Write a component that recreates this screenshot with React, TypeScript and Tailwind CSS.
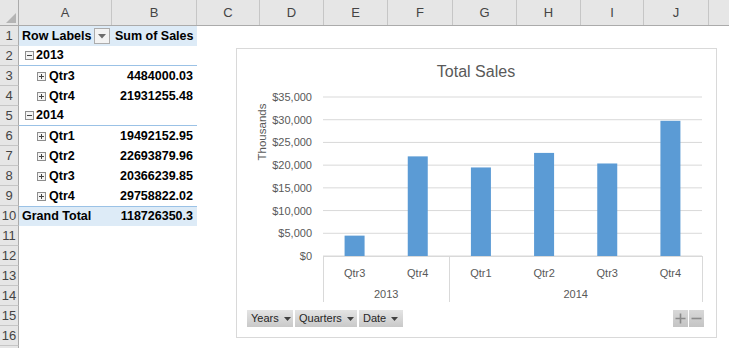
// Excel sheet with a pivot table and a pivot chart (Total Sales)

const COLS = [
  { name: "A", w: 93 },
  { name: "B", w: 85 },
  { name: "C", w: 63 },
  { name: "D", w: 64 },
  { name: "E", w: 64 },
  { name: "F", w: 65 },
  { name: "G", w: 64 },
  { name: "H", w: 64 },
  { name: "I", w: 63 },
  { name: "J", w: 65 },
  // column K is only partly in view; its letter falls past the edge
  { name: "", w: 64 },
];

type PivotRow = {
  label?: string;
  value?: string;
  kind: "header" | "year" | "qtr" | "total" | "empty";
};

const ROWS: PivotRow[] = [
  { kind: "header", label: "Row Labels", value: "Sum of Sales" },
  { kind: "year", label: "2013" },
  { kind: "qtr", label: "Qtr3", value: "4484000.03" },
  { kind: "qtr", label: "Qtr4", value: "21931255.48" },
  { kind: "year", label: "2014" },
  { kind: "qtr", label: "Qtr1", value: "19492152.95" },
  { kind: "qtr", label: "Qtr2", value: "22693879.96" },
  { kind: "qtr", label: "Qtr3", value: "20366239.85" },
  { kind: "qtr", label: "Qtr4", value: "29758822.02" },
  { kind: "total", label: "Grand Total", value: "118726350.3" },
  { kind: "empty" },
  { kind: "empty" },
  { kind: "empty" },
  { kind: "empty" },
  { kind: "empty" },
  { kind: "empty" },
];

const SALES = [
  { q: "Qtr3", v: 4484000.03 },
  { q: "Qtr4", v: 21931255.48 },
  { q: "Qtr1", v: 19492152.95 },
  { q: "Qtr2", v: 22693879.96 },
  { q: "Qtr3", v: 20366239.85 },
  { q: "Qtr4", v: 29758822.02 },
];

function ExpandBox({ plus }: { plus: boolean }) {
  return (
    <svg width="9" height="9" viewBox="0 0 9 9" className="shrink-0">
      <rect x="0.5" y="0.5" width="8" height="8" fill="#f4f4f4" stroke="#8e8e8e" />
      <line x1="2" y1="4.5" x2="7" y2="4.5" stroke="#444" />
      {plus && <line x1="4.5" y1="2" x2="4.5" y2="7" stroke="#444" />}
    </svg>
  );
}

function FilterButton() {
  return (
    <div className="w-[16px] h-[16px] shrink-0 border border-[#acacac] bg-[#f3f3f3] flex items-center justify-center">
      <svg width="8" height="5" viewBox="0 0 8 5">
        <path d="M0 0 H8 L4 4.5 Z" fill="#6d6d6d" />
      </svg>
    </div>
  );
}

function PivotCells({ row }: { row: PivotRow }) {
  if (row.kind === "empty") {
    return <div className="w-[178px] shrink-0" />;
  }

  const bg =
    row.kind === "header" || row.kind === "total" ? "bg-[#ddebf7]" : "";
  const border =
    row.kind === "year"
      ? "border-b border-[#9bc2e6]"
      : row.kind === "total"
        ? "border-t border-[#9bc2e6]"
        : "";

  return (
    <div
      className={`flex w-[178px] shrink-0 h-full font-bold text-[12.5px] text-black whitespace-nowrap ${bg} ${border}`}
    >
      <div className="w-[93px] shrink-0 flex items-center">
        {row.kind === "header" && (
          <>
            <span className="pl-[3px] w-[75px] shrink-0">{row.label}</span>
            <FilterButton />
          </>
        )}
        {row.kind === "year" && (
          <span className="pl-[6px] flex items-center gap-[2px]">
            <ExpandBox plus={false} />
            {row.label}
          </span>
        )}
        {row.kind === "qtr" && (
          <span className="pl-[18px] flex items-center gap-[3px]">
            <ExpandBox plus />
            {row.label}
          </span>
        )}
        {row.kind === "total" && <span className="pl-[3px]">{row.label}</span>}
      </div>
      <div
        className={`w-[85px] shrink-0 flex items-center ${
          row.kind === "header" ? "pl-[3px]" : "justify-end pr-[4px]"
        }`}
      >
        {row.value}
      </div>
    </div>
  );
}

function ChartFieldButton({ label, w }: { label: string; w: string }) {
  return (
    <div
      className={`${w} h-[17px] flex items-center gap-[5px] pl-[4px] bg-gradient-to-b from-[#e4e4e4] to-[#c9c9c9] text-[11px] text-[#262626]`}
    >
      <span>{label}</span>
      <svg width="7" height="4" viewBox="0 0 7 4">
        <path d="M0 0 H7 L3.5 4 Z" fill="#404040" />
      </svg>
    </div>
  );
}

function PivotChart() {
  const plotLeft = 86;
  const plotRight = 465;
  const base = 207;
  const scale = 159 / 35000;
  const catW = (plotRight - plotLeft) / 6;
  const ticks = [0, 5000, 10000, 15000, 20000, 25000, 30000, 35000];

  return (
    <div className="absolute left-[236px] top-[48px] w-[481px] h-[290px] bg-white border border-[#d9d9d9]">
      <svg width="479" height="288" className="absolute left-0 top-0">
        <text x="239" y="28" textAnchor="middle" fontSize="16" fill="#595959">
          Total Sales
        </text>
        <text
          transform="translate(29 83) rotate(-90)"
          textAnchor="middle"
          fontSize="11.5"
          fill="#595959"
        >
          Thousands
        </text>
        {ticks.map((t) => {
          const y = base - t * scale;
          return (
            <g key={t}>
              <line x1={plotLeft} y1={y} x2={plotRight} y2={y} stroke="#d9d9d9" />
              <text x="75" y={y + 4} textAnchor="end" fontSize="11" fill="#595959">
                ${t.toLocaleString("en-US")}
              </text>
            </g>
          );
        })}
        {SALES.map((s, i) => {
          const cx = plotLeft + catW * (i + 0.5);
          const h = (s.v / 1000) * scale;
          return (
            <g key={i}>
              <rect x={cx - 10} y={base - h} width="20" height={h} fill="#5b9bd5" />
              <text x={cx} y="228" textAnchor="middle" fontSize="11" fill="#595959">
                {s.q}
              </text>
            </g>
          );
        })}
        <line x1={plotLeft} y1={base + 0.5} x2={plotRight} y2={base + 0.5} stroke="#d9d9d9" />
        {[plotLeft, plotLeft + catW * 2, plotRight].map((x) => (
          <line
            key={x}
            x1={Math.round(x) + 0.5}
            y1={base}
            x2={Math.round(x) + 0.5}
            y2={253}
            stroke="#d9d9d9"
          />
        ))}
        <text x={plotLeft + catW} y="249" textAnchor="middle" fontSize="11" fill="#595959">
          2013
        </text>
        <text x={plotLeft + catW * 4} y="249" textAnchor="middle" fontSize="11" fill="#595959">
          2014
        </text>
      </svg>

      {/* pivot field buttons */}
      <div className="absolute left-[10px] top-[261px] flex gap-[2px]">
        <ChartFieldButton label="Years" w="w-[46px]" />
        <ChartFieldButton label="Quarters" w="w-[62px]" />
        <ChartFieldButton label="Date" w="w-[44px]" />
      </div>
      <div className="absolute left-[436px] top-[261px] flex gap-[1px]">
        <div className="w-[15px] h-[17px] bg-gradient-to-b from-[#d8d8d8] to-[#c4c4c4] flex items-center justify-center">
          <svg width="11" height="11" viewBox="0 0 11 11">
            <path d="M5.5 0.5 V10.5 M0.5 5.5 H10.5" stroke="#8a8a8a" strokeWidth="1.6" />
          </svg>
        </div>
        <div className="w-[15px] h-[17px] bg-gradient-to-b from-[#d8d8d8] to-[#c4c4c4] flex items-center justify-center">
          <svg width="11" height="11" viewBox="0 0 11 11">
            <path d="M0.5 5.5 H10.5" stroke="#8a8a8a" strokeWidth="1.6" />
          </svg>
        </div>
      </div>
    </div>
  );
}

export default function App() {
  return (
    <div className="relative w-[729px] h-[348px] overflow-hidden bg-white font-['Liberation_Sans',Arial,sans-serif]">
      {/* column headers */}
      <div className="flex h-[26px] bg-[#e6e6e6] border-b border-[#ababab]">
        <div className="w-[19px] shrink-0 border-r border-[#ababab] flex items-end justify-end p-[2px]">
          <svg width="10" height="10" viewBox="0 0 10 10">
            <path d="M10 0 V10 H0 Z" fill="#b4b4b4" />
          </svg>
        </div>
        {COLS.map((c, i) => (
          <div
            key={i}
            style={{ width: c.w }}
            className="shrink-0 border-r border-[#c6c6c6] flex items-center justify-center text-[13px] text-[#444]"
          >
            {c.name}
          </div>
        ))}
      </div>

      {/* rows */}
      {ROWS.map((r, i) => (
        <div key={i} className="flex h-[20px]">
          <div className="w-[19px] shrink-0 bg-[#e6e6e6] border-r border-[#ababab] border-b border-b-[#c6c6c6] flex items-center justify-center text-[13px] text-[#444]">
            {i + 1}
          </div>
          <PivotCells row={r} />
        </div>
      ))}
      <div className="flex h-[20px]">
        <div className="w-[19px] shrink-0 bg-[#e6e6e6] border-r border-[#ababab]" />
      </div>

      <PivotChart />
    </div>
  );
}
